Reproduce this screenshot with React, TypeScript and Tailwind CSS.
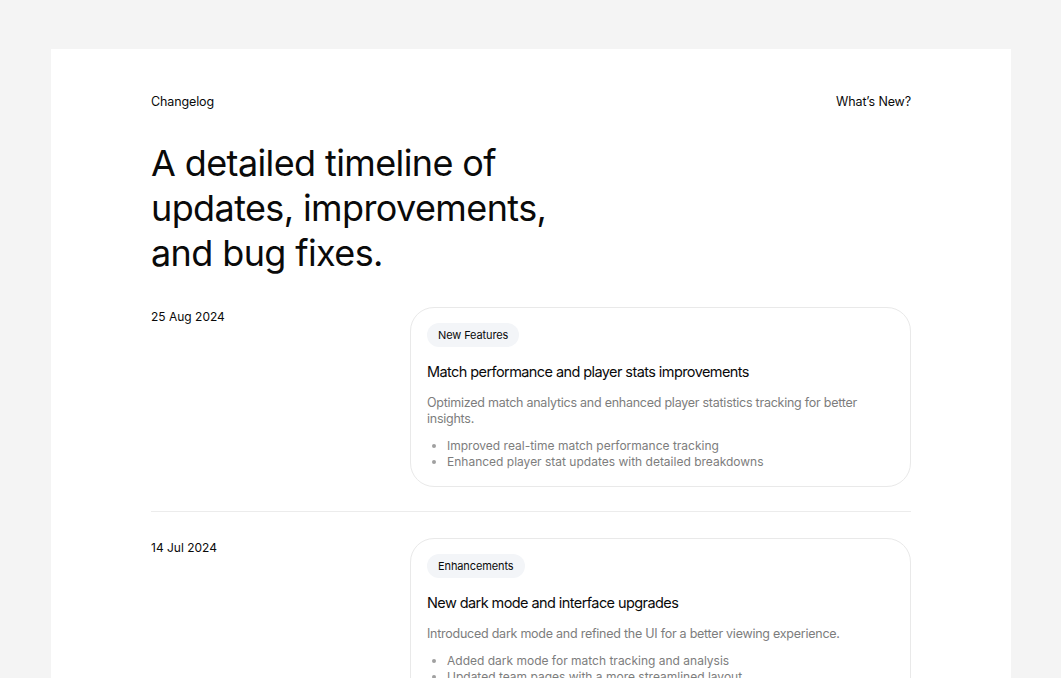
import React from "react";

const entries = [
  {
    date: "25 Aug 2024",
    badge: "New Features",
    title: "Match performance and player stats improvements",
    desc: "Optimized match analytics and enhanced player statistics tracking for better insights.",
    items: [
      "Improved real-time match performance tracking",
      "Enhanced player stat updates with detailed breakdowns",
    ],
  },
  {
    date: "14 Jul 2024",
    badge: "Enhancements",
    title: "New dark mode and interface upgrades",
    desc: "Introduced dark mode and refined the UI for a better viewing experience.",
    items: [
      "Added dark mode for match tracking and analysis",
      "Updated team pages with a more streamlined layout",
    ],
  },
];

export default function App() {
  return (
    <div
      className="min-h-screen bg-[#f4f4f4] pt-[49px] pl-[51px] pr-[50px]"
      style={{ fontFamily: "Inter, 'Noto Sans', sans-serif" }}
    >
      <div className="bg-white px-[100px] pt-[43px] pb-10 text-[#0a0a0a]">
        <div className="flex justify-between text-[12.5px] leading-5 tracking-[-0.01em]">
          <span>Changelog</span>
          <span>What’s New?</span>
        </div>
        <h1 className="mt-[29px] text-[36px] leading-[45px] tracking-[-0.017em] font-normal">
          A detailed timeline of
          <br />
          updates, improvements,
          <br />
          and bug fixes.
        </h1>
        <div className="mt-[31px] flex flex-col">
          {entries.map((e, i) => (
            <div key={i}>
              {i > 0 && <div className="h-px bg-[#ececec] mt-[24px] mb-[26px]" />}
              <div className="flex">
                <div className="w-[259px] shrink-0 pt-px text-[12px] leading-[18px]">{e.date}</div>
                <div className="flex-1 rounded-[24px] border border-[#e9e9e9] px-4 pt-[15px] pb-4">
                  <div className="flex">
                    <span className="flex h-6 items-center rounded-full bg-[#f3f5f8] px-[11px] text-[11px] leading-none tracking-[-0.01em]">
                      {e.badge}
                    </span>
                  </div>
                  <div className="mt-[13px] text-[14.5px] leading-6 tracking-[-0.04em]">{e.title}</div>
                  <p className="mt-[11px] text-[12.5px] leading-4 tracking-[-0.02em] text-[#7d7d7d]">{e.desc}</p>
                  <ul className="mt-[11px] list-disc pl-5 text-[12px] leading-4 text-[#7d7d7d] marker:text-[#a0a0a0]">
                    {e.items.map((it, j) => (
                      <li key={j}>{it}</li>
                    ))}
                  </ul>
                </div>
              </div>
            </div>
          ))}
        </div>
      </div>
    </div>
  );
}
